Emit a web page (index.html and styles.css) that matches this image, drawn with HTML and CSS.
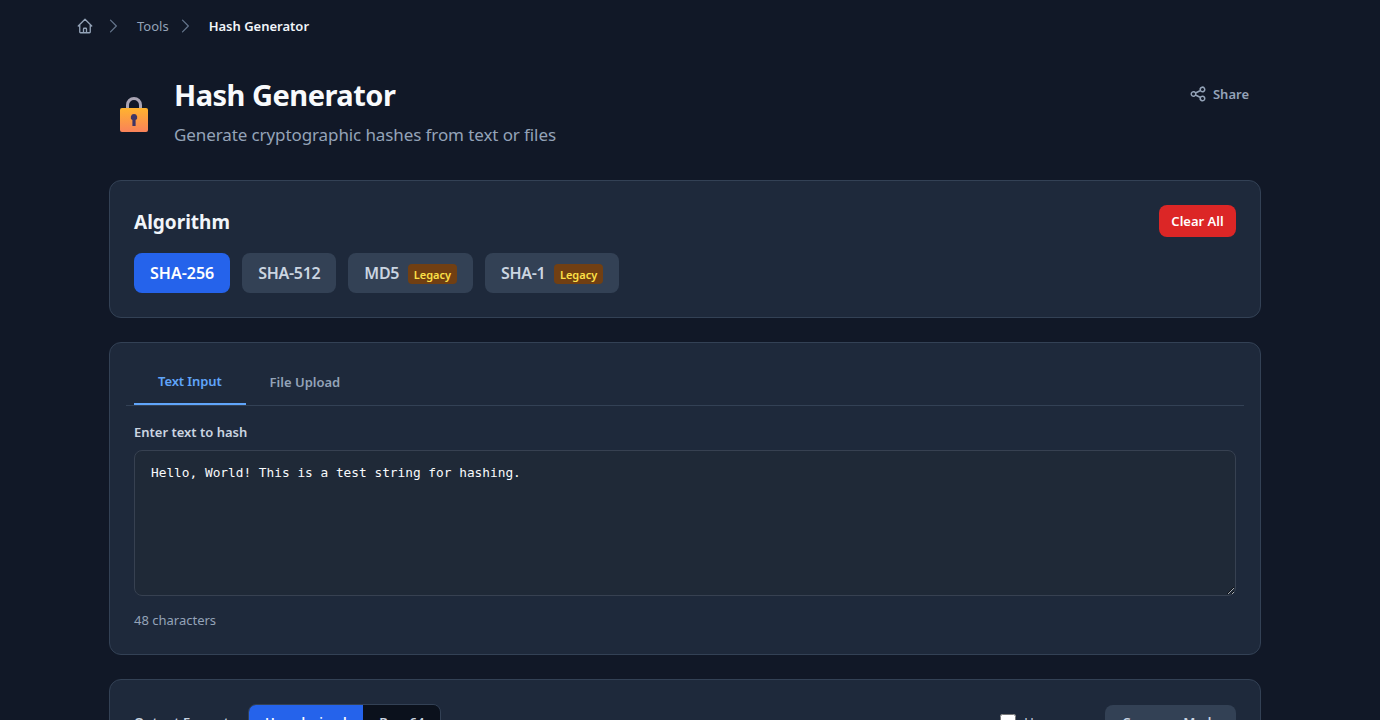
FILE: index.html
```html
<!DOCTYPE html>
<html lang="en">
<head>
    <meta charset="UTF-8">
    <meta name="viewport" content="width=device-width, initial-scale=1.0">
    <title>Hash Generator</title>
    <link rel="stylesheet" href="styles.css">
</head>
<body>

<nav class="breadcrumb">
    <a class="crumb-home" href="#">
        <svg width="18" height="18" viewBox="0 0 24 24" fill="none" stroke="currentColor" stroke-width="1.75" stroke-linecap="round" stroke-linejoin="round"><path d="M3 12l2-2m0 0l7-7 7 7M5 10v10a1 1 0 001 1h3m10-11l2 2m-2-2v10a1 1 0 01-1 1h-3m-6 0a1 1 0 001-1v-4a1 1 0 011-1h2a1 1 0 011 1v4a1 1 0 001 1m-6 0h6"/></svg>
    </a>
    <svg class="crumb-sep" width="20" height="20" viewBox="0 0 24 24" fill="none" stroke="currentColor" stroke-width="1.5" stroke-linecap="round" stroke-linejoin="round"><path d="m9 5 7 7-7 7"/></svg>
    <a class="crumb-link" href="#">Tools</a>
    <svg class="crumb-sep" width="20" height="20" viewBox="0 0 24 24" fill="none" stroke="currentColor" stroke-width="1.5" stroke-linecap="round" stroke-linejoin="round"><path d="m9 5 7 7-7 7"/></svg>
    <span class="crumb-current">Hash Generator</span>
</nav>

<div class="container">
    <header class="page-header">
        <div class="title-group">
            <svg class="title-icon" width="36" height="36" viewBox="0 0 36 36">
                <defs>
                    <linearGradient id="lockBody" x1="0" y1="0" x2="0" y2="1">
                        <stop offset="0" stop-color="#ffb32e"/>
                        <stop offset="1" stop-color="#f9825a"/>
                    </linearGradient>
                </defs>
                <path d="M11.500 14V9a6.500 6.500 0 0 1 13 0v5" fill="none" stroke="#a9a4b4" stroke-width="3"/>
                <rect x="4" y="12" width="28" height="24" rx="2" fill="url(#lockBody)"/>
                <path d="M18 18a3.200 3.200 0 0 1 1.600 6V30h-3.200v-6A3.200 3.200 0 0 1 18 18z" fill="#3f3565"/>
            </svg>
            <div>
                <h1>Hash Generator</h1>
                <p class="subtitle">Generate cryptographic hashes from text or files</p>
            </div>
        </div>
        <button class="share-btn">
            <svg width="18" height="18" viewBox="0 0 24 24" fill="none" stroke="currentColor" stroke-width="2" stroke-linecap="round" stroke-linejoin="round"><path d="M8.684 13.342C8.886 12.938 9 12.482 9 12c0-.482-.114-.938-.316-1.342m0 2.684a3 3 0 110-2.684m0 2.684l6.632 3.316m-6.632-6l6.632-3.316m0 0a3 3 0 105.367-2.684 3 3 0 00-5.367 2.684zm0 9.316a3 3 0 105.368 2.684 3 3 0 00-5.368-2.684z"/></svg>
            Share
        </button>
    </header>

    <section class="card">
        <div class="card-top">
            <h2>Algorithm</h2>
            <button class="clear-btn">Clear All</button>
        </div>
        <div class="algo-list">
            <button class="algo-btn active">SHA-256</button>
            <button class="algo-btn">SHA-512</button>
            <button class="algo-btn">MD5 <span class="badge">Legacy</span></button>
            <button class="algo-btn">SHA-1 <span class="badge">Legacy</span></button>
        </div>
    </section>

    <section class="card">
        <div class="tabs">
            <button class="tab active">Text Input</button>
            <button class="tab">File Upload</button>
        </div>
        <label class="field-label" for="hashText">Enter text to hash</label>
        <textarea id="hashText" class="text-box" spellcheck="false">Hello, World! This is a test string for hashing.</textarea>
        <p class="char-count">48 characters</p>
    </section>

    <section class="card">
        <div class="options-row">
            <div class="format-group">
                <span class="format-label">Output Format:</span>
                <div class="segmented">
                    <button class="seg-btn active">Hexadecimal</button>
                    <button class="seg-btn">Base64</button>
                </div>
            </div>
            <div class="options-right">
                <label class="check-label"><input type="checkbox"> Uppercase</label>
                <button class="compare-btn">Compare Mode</button>
            </div>
        </div>
    </section>
</div>

</body>
</html>
```

FILE: styles.css
```css
* {
    box-sizing: border-box;
}
body {
    margin: 0;
    padding-right: 10px;
    background-color: #111827;
    color: #f1f5f9;
    font-family: "Noto Sans", "Open Sans", Arial, sans-serif;
}
button {
    font-family: inherit;
    border: none;
    cursor: pointer;
}
.breadcrumb {
    display: flex;
    align-items: center;
    height: 52px;
    padding-left: 76px;
    font-size: 13px;
    color: #94a3b8;
}
.crumb-home {
    display: flex;
    color: #94a3b8;
}
.crumb-sep {
    margin: 0 14px 0 9px;
    color: #64748b;
}
.crumb-link {
    color: #94a3b8;
    text-decoration: none;
}
.crumb-link + .crumb-sep {
    margin-left: 6px;
}
.crumb-current {
    color: #f1f5f9;
    font-weight: 600;
}
.container {
    width: 1152px;
    margin: 0 auto;
}
.page-header {
    display: flex;
    justify-content: space-between;
    align-items: flex-start;
    padding-top: 24px;
    margin-bottom: 32px;
}
.title-group {
    display: flex;
    align-items: center;
    gap: 22px;
}
.title-icon {
    margin-left: 7px;
    margin-top: 3px;
}
.page-header h1 {
    margin: 0;
    font-size: 29px;
    line-height: 38px;
    font-weight: 700;
    letter-spacing: -0.5px;
    color: #f8fafc;
}
.subtitle {
    margin: 8px 0 0;
    font-size: 17px;
    line-height: 26px;
    letter-spacing: -0.1px;
    color: #94a3b8;
}
.share-btn {
    display: flex;
    align-items: center;
    gap: 6px;
    margin: 9px 12px 0 0;
    padding: 0;
    background: none;
    color: #94a3b8;
    font-size: 13px;
    font-weight: 600;
}
.card {
    margin-bottom: 24px;
    padding: 24px;
    background-color: #1e293b;
    border: 1px solid #334155;
    border-radius: 12px;
}
.card-top {
    display: flex;
    justify-content: space-between;
    align-items: center;
    margin-bottom: 16px;
}
.card-top h2 {
    margin: 2px 0 0;
    font-size: 19px;
    font-weight: 700;
    color: #f1f5f9;
}
.clear-btn {
    width: 77px;
    height: 32px;
    padding: 0;
    background-color: #dc2626;
    color: #ffffff;
    border-radius: 8px;
    font-size: 13px;
    font-weight: 600;
}
.algo-list {
    display: flex;
    gap: 12px;
}
.algo-btn {
    display: flex;
    align-items: center;
    gap: 8.500px;
    height: 40px;
    padding: 0 16px;
    background-color: #334155;
    color: #cbd5e1;
    border-radius: 8px;
    font-size: 16px;
    font-weight: 600;
    letter-spacing: -0.3px;
}
.algo-btn.active {
    background-color: #2563eb;
    color: #ffffff;
    letter-spacing: 0;
}
.badge {
    margin-top: 2px;
    padding: 0 6px;
    height: 20px;
    line-height: 21px;
    background-color: #713f12;
    color: #fde047;
    border-radius: 4px;
    font-size: 11px;
    font-weight: 600;
    letter-spacing: 0;
}
.tabs {
    display: flex;
    margin: 0 -8px 17px;
    padding-left: 8px;
    border-bottom: 1px solid #334155;
}
.tab {
    height: 38px;
    padding: 0 24px 8px;
    background: none;
    color: #94a3b8;
    font-size: 13px;
    font-weight: 600;
}
.tab.active {
    color: #60a5fa;
    letter-spacing: -0.1px;
    border-bottom: 2px solid #60a5fa;
}
.field-label {
    display: block;
    margin-bottom: 9px;
    font-size: 13px;
    line-height: 18px;
    font-weight: 600;
    color: #cbd5e1;
}
.text-box {
    display: block;
    width: 100%;
    height: 146px;
    padding: 12px 16px;
    background-color: #1f2937;
    color: #f8fafc;
    border: 1px solid #374151;
    border-radius: 8px;
    font-family: "DejaVu Sans Mono", monospace;
    font-size: 12.8px;
    line-height: 20px;
    outline: none;
}
.char-count {
    margin: 14px 0 0;
    font-size: 13px;
    line-height: 20px;
    color: #94a3b8;
}
.options-row {
    display: flex;
    justify-content: space-between;
    align-items: center;
}
.format-group, .options-right {
    display: flex;
    align-items: center;
}
.format-label {
    margin: 0 15px 4px 0;
    font-size: 13px;
    font-weight: 600;
    color: #cbd5e1;
}
.segmented {
    display: flex;
    border: 1px solid #334155;
    border-radius: 8px;
    overflow: hidden;
}
.seg-btn {
    height: 38px;
    padding: 0 16px 4px;
    background-color: #0b111c;
    color: #cbd5e1;
    font-size: 13px;
    font-weight: 600;
}
.seg-btn.active {
    padding: 0 16.500px 4px;
    background-color: #2563eb;
    color: #ffffff;
}
.check-label {
    display: flex;
    align-items: center;
    gap: 8px;
    margin: 0 16px 4px 0;
    font-size: 13px;
    color: #cbd5e1;
}
.check-label input {
    width: 16px;
    height: 16px;
    margin: 0;
}
.compare-btn {
    height: 38px;
    padding: 0 17px 4px;
    background-color: #334155;
    color: #cbd5e1;
    border-radius: 8px;
    font-size: 13px;
    font-weight: 600;
}
```
